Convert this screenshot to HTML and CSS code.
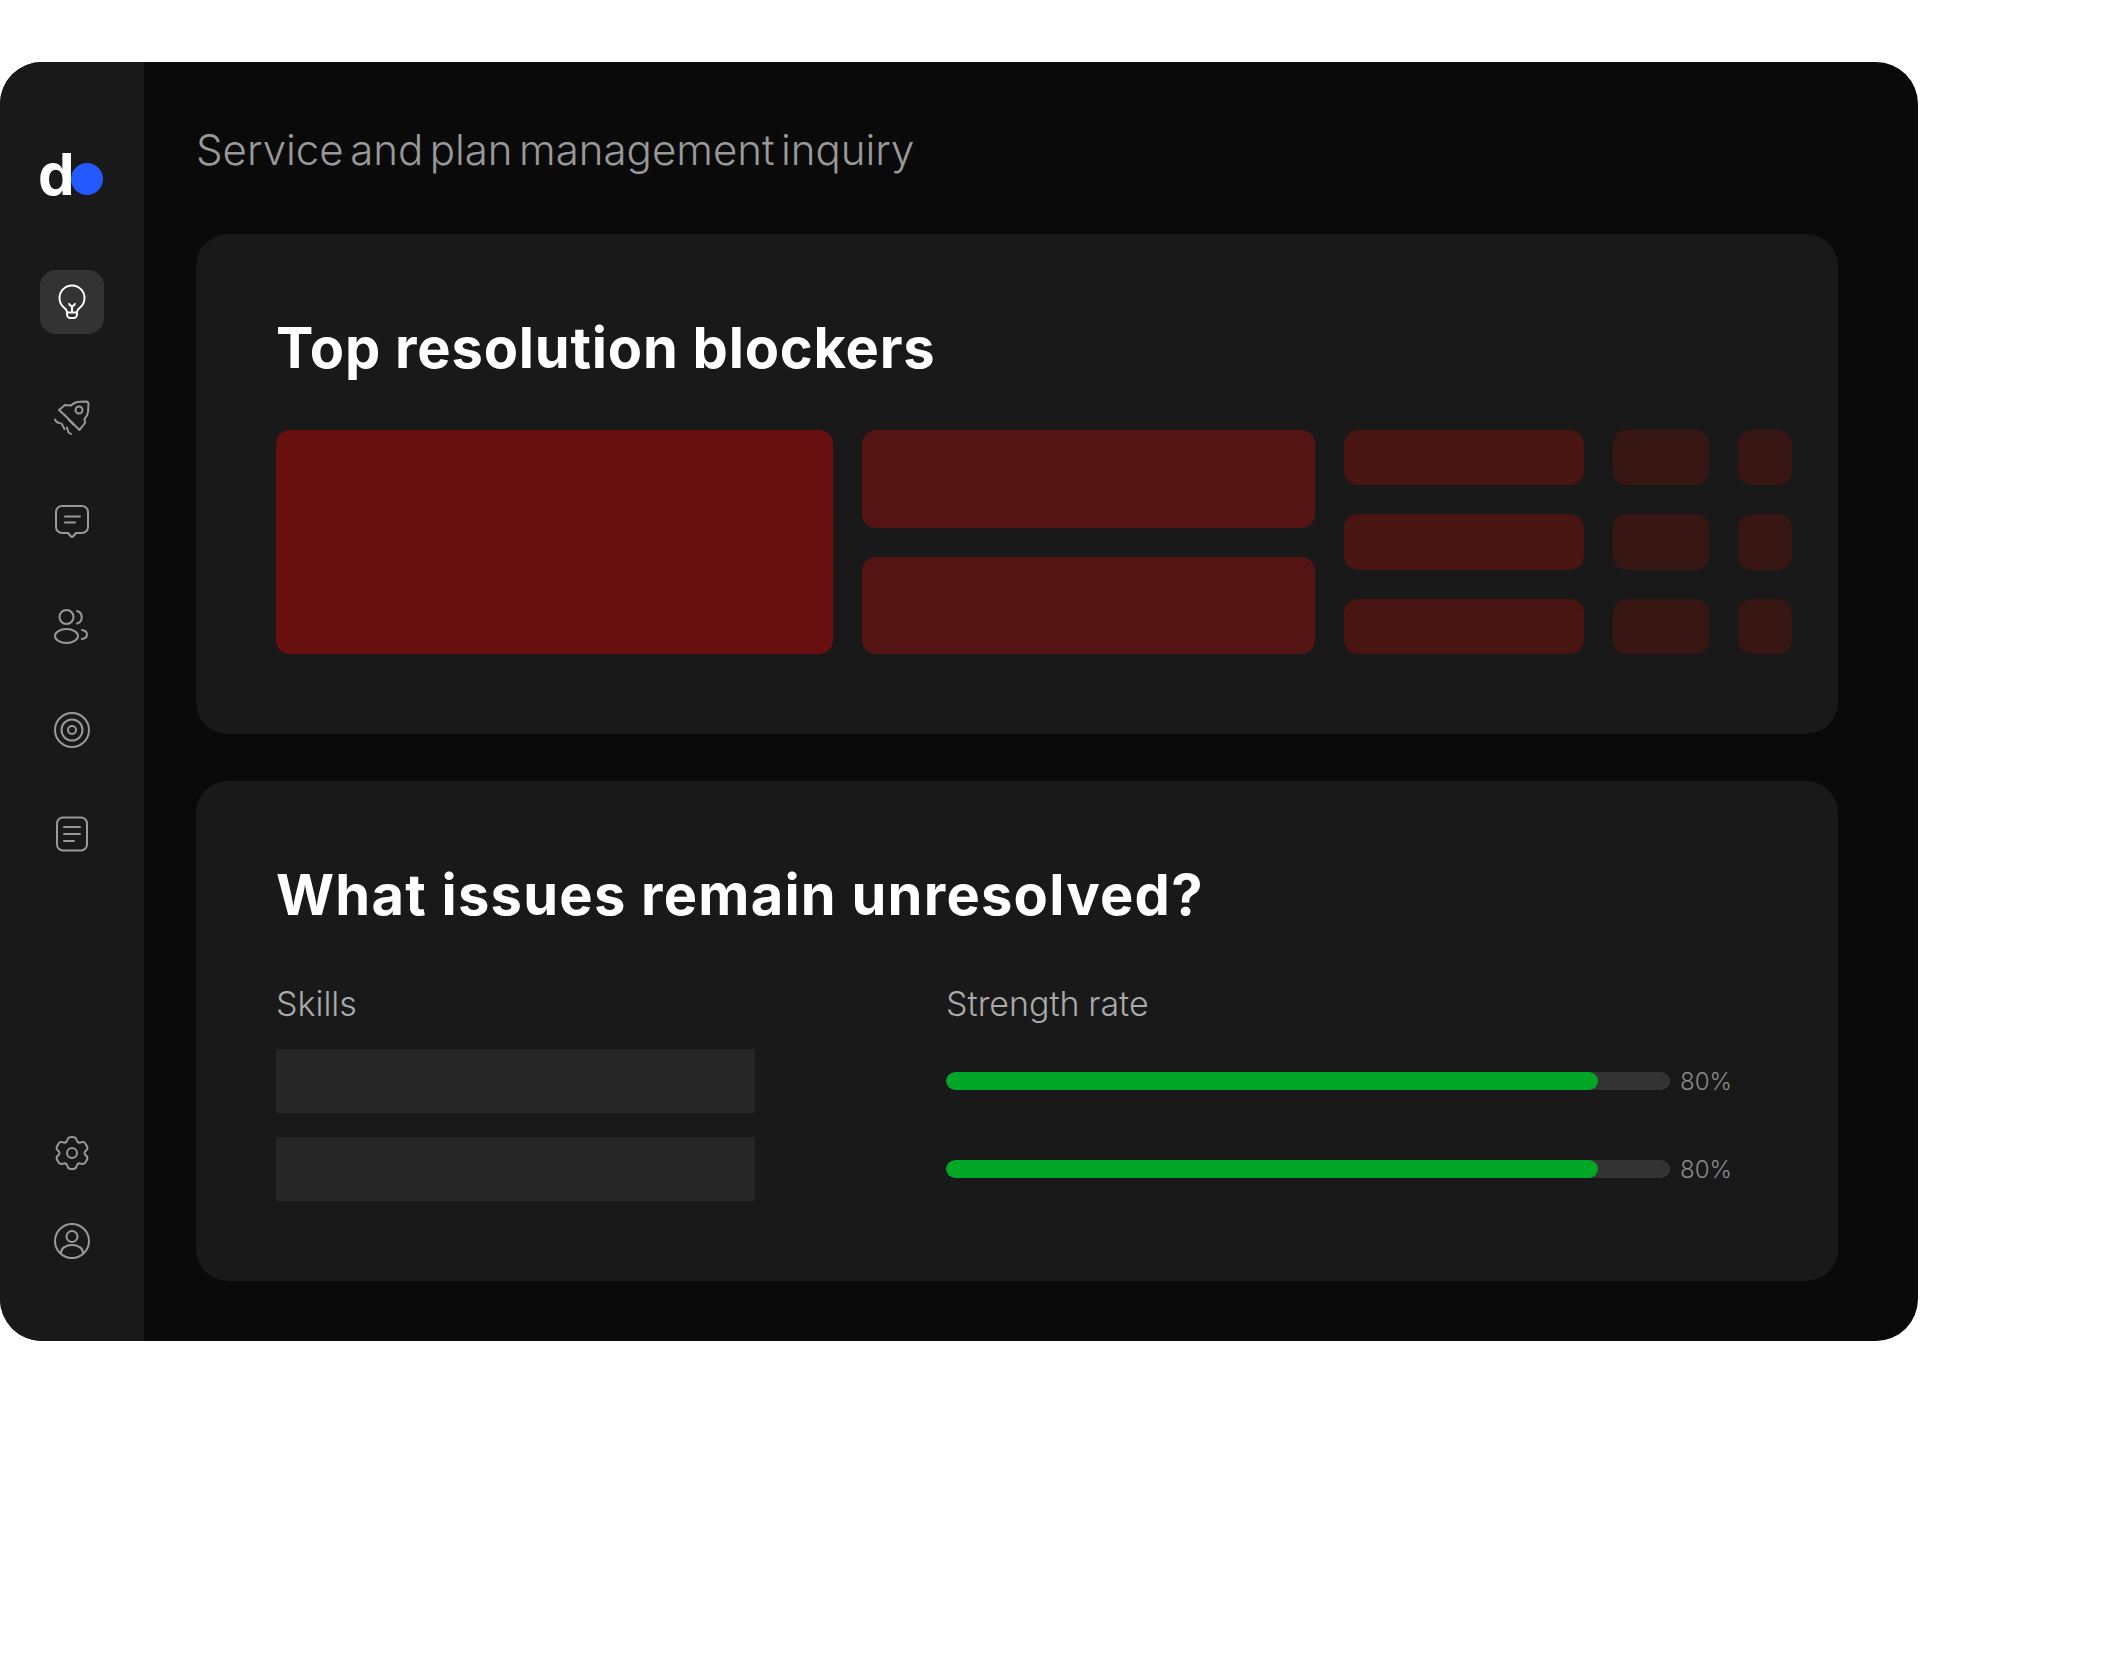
FILE: index.html
```html
<!DOCTYPE html>
<html lang="en">
<head>
<meta charset="utf-8">
<title>Service and plan management inquiry</title>
<link rel="stylesheet" href="styles.css">
</head>
<body>
<div class="window">
  <aside class="sidebar">
    <div class="logo"><span class="logo-d">d</span><span class="logo-dot"></span></div>
    <div class="nav-active">
      <svg class="icon icon-white" viewBox="0 0 36 36"><path d="M13 28c0-2-1-3-3-4.400A12.500 12.500 0 1 1 26 23.600c-2 1.400-3 2.400-3 4.400v2.500a3.500 3.500 0 0 1-3.500 3.500h-3a3.500 3.500 0 0 1-3.500-3.500z"/><path d="M13 28.500h10M15 20l3 3 3-3M18 23v5"/></svg>
    </div>
    <nav class="nav">
      <svg class="icon" viewBox="0 0 36 36"><path d="M23 2l9-.5a2.500 2.500 0 0 1 2.500 2.500L34 12c-.2 2.500-1.500 5-3.500 7l.5 4-5.500 7-4.500-4.500-10-10-6-5.500 6-5 6 .5c1.500-1.500 3-2.500 6-3.500z"/><circle cx="25" cy="10" r="3.500"/><path d="M15 20l5 5M1 19.500l1.500 2.500 3 1M7.500 23.500l3 5.500M13 27.500l1.500 5 2.500 1.500"/></svg>
      <svg class="icon" viewBox="0 0 36 36"><path d="M8 2h20a6 6 0 0 1 6 6v15a6 6 0 0 1-6 6h-6l-3 3.500a1.300 1.300 0 0 1-2 0l-3-3.500H8a6 6 0 0 1-6-6V8a6 6 0 0 1 6-6z"/><path d="M11 12.500h15M11 18.500h10"/></svg>
      <svg class="icon" viewBox="0 0 36 36"><circle cx="12.500" cy="9" r="7"/><path d="M23 3a6.500 6.500 0 0 1 0 12.500"/><ellipse cx="12.500" cy="28" rx="11.500" ry="7"/><path d="M28 22c3 .5 5 2.500 5 4.500s-2 4-5 4.500"/></svg>
      <svg class="icon" viewBox="0 0 36 36"><circle cx="18" cy="18" r="17"/><circle cx="18" cy="18" r="10.500"/><circle cx="18" cy="18" r="4"/></svg>
      <svg class="icon" viewBox="0 0 36 36"><rect x="3" y="1.500" width="30" height="33" rx="6"/><path d="M10 11h16M10 18h16M10 25h10"/></svg>
    </nav>
    <div class="nav-bottom">
      <svg class="icon" viewBox="0 0 36 36"><circle cx="18" cy="18" r="5"/><path d="M14 3.500c1-2 7-2 8 0l1 2.500c.5 1 2 1.800 3 1.500l3-.5c2-.2 5.500 5.500 4 7.500l-2 2c-.6.800-.6 2.200 0 3l2 2c1.500 2-2 7.700-4 7.500l-3-.5c-1-.3-2.500.5-3 1.500l-1 2.500c-1 2-7 2-8 0l-1-2.500c-.5-1-2-1.800-3-1.500l-3 .5c-2 .2-5.500-5.500-4-7.500l2-2c.6-.8.6-2.200 0-3l-2-2c-1.500-2 2-7.700 4-7.500l3 .5c1 .3 2.500-.5 3-1.500z"/></svg>
      <svg class="icon" viewBox="0 0 36 36"><circle cx="18" cy="18" r="17"/><circle cx="18" cy="13.500" r="5.500"/><path d="M7 30c0-5 5-8 11-8s11 3 11 8"/></svg>
    </div>
  </aside>
  <main class="main">
    <h1 class="page-title">Service and plan management inquiry</h1>
    <section class="card">
      <h2 class="card-title">Top resolution blockers</h2>
      <div class="treemap">
        <div class="tile tile-big"></div>
        <div class="col col-mid">
          <div class="tile tile-mid"></div>
          <div class="tile tile-mid"></div>
        </div>
        <div class="col col-3">
          <div class="tile tile-3"></div>
          <div class="tile tile-3"></div>
          <div class="tile tile-3"></div>
        </div>
        <div class="col col-4">
          <div class="tile tile-4"></div>
          <div class="tile tile-4"></div>
          <div class="tile tile-4"></div>
        </div>
        <div class="col col-5">
          <div class="tile tile-4"></div>
          <div class="tile tile-4"></div>
          <div class="tile tile-4"></div>
        </div>
      </div>
    </section>
    <section class="card">
      <h2 class="card-title card-title-wide">What issues remain unresolved?</h2>
      <div class="skills">
        <div class="skills-left">
          <div class="label">Skills</div>
          <div class="skill-box"></div>
          <div class="skill-box"></div>
        </div>
        <div class="skills-right">
          <div class="label">Strength rate</div>
          <div class="bar-row"><div class="track"><div class="fill" style="width:90%"></div></div><span class="pct">80%</span></div>
          <div class="bar-row"><div class="track"><div class="fill" style="width:90%"></div></div><span class="pct">80%</span></div>
        </div>
      </div>
    </section>
  </main>
</div>
</body>
</html>
```
FILE: styles.css
```css
* { box-sizing: border-box; }
html, body { margin: 0; background: #fff; }
body { padding-top: 62px; height: 1674px; font-family: "Inter", "Liberation Sans", sans-serif; }
.window { width: 1918px; height: 1279px; border-radius: 42px; overflow: hidden; display: flex; background: #0a0a0a; }
.sidebar { width: 144px; background: #191919; display: flex; flex-direction: column; align-items: center; padding-top: 86px; }
.logo { width: 64px; height: 52px; display: flex; align-items: flex-end; }
.logo-d { position: relative; z-index: 1; color: #fff; font: 700 58px/52px "Inter", sans-serif; margin-top: -4px; margin-left: -2px; height: 52px; }
.logo-dot { width: 32px; height: 32px; border-radius: 50%; background: #2459ff; margin-left: -4px; margin-bottom: 5px; }
.nav-active { width: 64px; height: 64px; border-radius: 16px; background: #333; margin-top: 70px; display: flex; align-items: center; justify-content: center; }
.nav { display: flex; flex-direction: column; gap: 68px; margin-top: 66px; }
.nav-bottom { display: flex; flex-direction: column; gap: 52px; margin-top: auto; margin-bottom: 82px; }
.icon { width: 36px; height: 36px; display: block; fill: none; stroke: #999; stroke-width: 2; stroke-linecap: round; stroke-linejoin: round; }
.icon-white { stroke: #fff; }
.main { flex: 1; padding: 54px 80px 0 52px; display: flex; flex-direction: column; }
.page-title { margin: 0 0 50px; font-size: 42px; line-height: 68px; font-weight: 300; color: #999; letter-spacing: 0; word-spacing: -5.300px; }
.card { background: #191919; border-radius: 32px; height: 500px; padding: 79px 44px 0 80px; margin-bottom: 47px; }
.card-title { margin: 0; font-size: 56px; line-height: 70px; font-weight: 700; color: #fff; letter-spacing: 0.800px; }
.card-title-wide { letter-spacing: 1.250px; }
.treemap { display: flex; gap: 29px; margin-top: 47px; height: 224px; }
.tile { border-radius: 14px; }
.tile-big { width: 557px; background: #681010; }
.col { display: flex; flex-direction: column; gap: 29px; }
.col-mid { width: 453px; }
.col-3 { width: 240px; }
.col-4 { width: 96px; }
.col-5 { width: 54px; }
.col > .tile { flex: 1; }
.tile-mid { background: #551414; }
.tile-3 { background: #481513; }
.tile-4 { background: #381614; }
.skills { display: flex; margin-top: 52px; }
.skills-left { width: 670px; }
.skills-right { flex: 1; }
.label { font-size: 34px; line-height: 44px; font-weight: 300; color: #aaa; margin-bottom: 23px; word-spacing: -1px; }
.skill-box { width: 479px; height: 64px; background: #262626; margin-bottom: 24px; }
.bar-row { display: flex; align-items: center; height: 64px; margin-bottom: 24px; }
.track { width: 724px; height: 18px; border-radius: 9px; background: #333; overflow: hidden; }
.fill { height: 100%; border-radius: 9px; background: #00a626; }
.pct { margin-left: 10px; font-size: 24px; font-weight: 300; color: #8a8a8a; }
```
